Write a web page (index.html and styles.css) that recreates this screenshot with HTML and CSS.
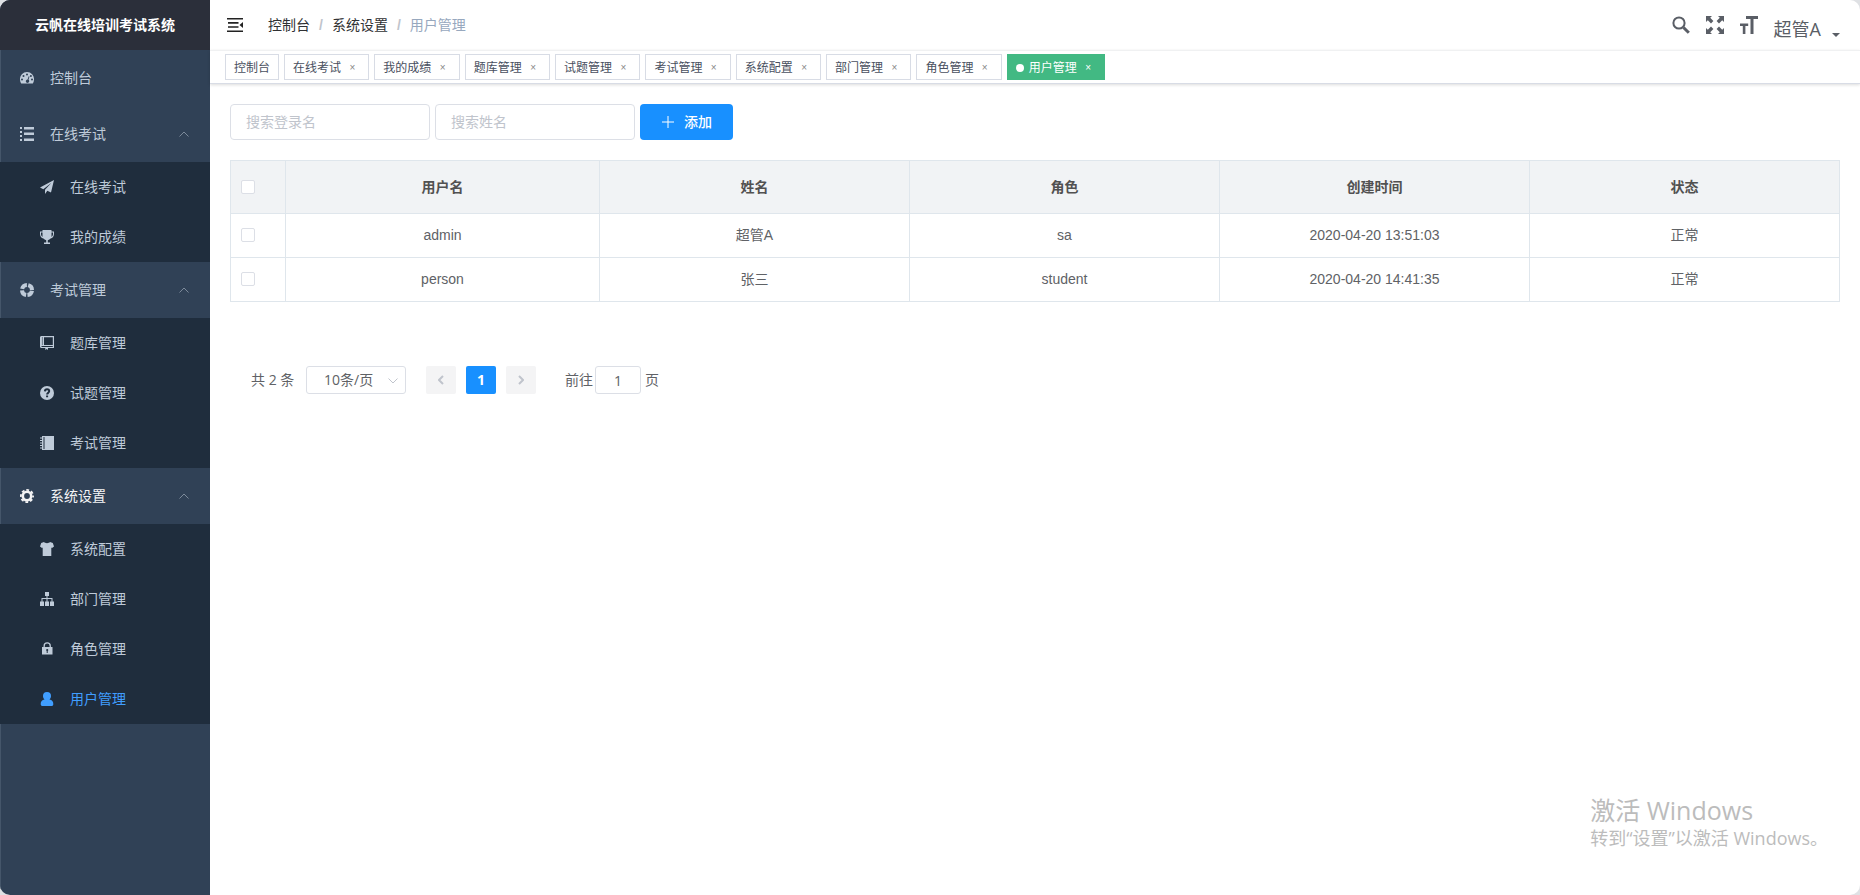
FILE: index.html
```html
<!DOCTYPE html>
<html lang="zh-CN">
<head>
<meta charset="utf-8">
<meta name="viewport" content="width=device-width, initial-scale=1">
<title>用户管理 - 云帆在线培训考试系统</title>
<link rel="stylesheet" href="styles.css">
</head>
<body>
<div class="app">
  <aside class="sidebar">
    <h1 class="logo">云帆在线培训考试系统</h1>
    <nav class="menu">
      <a class="menu-item" href="#"><svg class="icon" viewBox="0 0 14 14"><path fill-rule="evenodd" d="M7 1a7 7 0 0 0-7 7.500c0 1.300.4 2.600 1 3.700.1.200.3.300.5.300h11c.2 0 .4-.1.500-.3.600-1.100 1-2.400 1-3.700A7 7 0 0 0 7 1zM2 7.500a1 1 0 1 1 0 2 1 1 0 0 1 0-2zM3.500 4a1 1 0 1 1 0 2 1 1 0 0 1 0-2zM7 2.500a1 1 0 1 1 0 2 1 1 0 0 1 0-2zM8.700 5.200l.8.300-1 3.300a1.700 1.700 0 1 1-.9-.3zM10.900 4a1 1 0 1 1 0 2 1 1 0 0 1 0-2zM12 7.500a1 1 0 1 1 0 2 1 1 0 0 1 0-2z"/></svg><span>控制台</span></a>
      <button class="menu-item" type="button" aria-expanded="true"><svg class="icon" viewBox="0 0 14 14"><path d="M0 0h2v2H0zM0 4h2v2H0zM0 8h2v2H0zM0 12h2v2H0zM4 0h10v2.500H4zM4 5.500h10V8H4zM4 11.500h10V14H4z"/></svg><span>在线考试</span><svg class="chevron" viewBox="0 0 10 6"><path d="M.5 5.500L5 1l4.500 4.500"/></svg></button>
      <div class="submenu">
        <a class="menu-item" href="#"><svg class="icon" viewBox="0 0 14 14"><path d="M14 0L0 7.500l3.300 1.700L11.500 2.800 5 9.800V14l2.300-3.200 3.700 1.700z"/></svg><span>在线考试</span></a>
        <a class="menu-item" href="#"><svg class="icon" viewBox="0 0 14 14"><path d="M2.500 0h9v1.500H14V4c0 2.300-1.400 4-3.400 4.600A4.500 4.500 0 0 1 7.800 10.200v2.300H10V14H4v-1.500h2.200v-2.300a4.500 4.500 0 0 1-2.800-1.600C1.400 8 0 6.300 0 4V1.500h2.500zM1 2.500V4c0 1.200.6 2.200 1.500 2.900V2.500zm10.500 0v4.400C12.400 6.200 13 5.200 13 4V2.500z"/></svg><span>我的成绩</span></a>
      </div>
      <button class="menu-item" type="button" aria-expanded="true"><svg class="icon" viewBox="0 0 14 14"><circle class="ring" cx="7" cy="7" r="5" stroke-dasharray="6.450 1.400" stroke-dashoffset="-.7"/></svg><span>考试管理</span><svg class="chevron" viewBox="0 0 10 6"><path d="M.5 5.500L5 1l4.500 4.500"/></svg></button>
      <div class="submenu">
        <a class="menu-item" href="#"><svg class="icon" viewBox="0 0 14 14"><path fill-rule="evenodd" d="M1.500 0H14v12H8v2l-1.300-1L5.300 14v-2H2c-1.200 0-2-.5-2-1.500v-9C0 .6.600 0 1.500 0zM4 1.200V9h8.800V1.200zM2 10c-1 0-1 1 0 1h10.800v-1zM1.900 1.500v1h1v-1zm0 2v1h1v-1zm0 2v1h1v-1zm0 2v1h1v-1z"/></svg><span>题库管理</span></a>
        <a class="menu-item" href="#"><svg class="icon" viewBox="0 0 14 14"><circle cx="7" cy="7" r="7"/><path class="cut" d="M4.900 5.400C5 2.400 9.200 2.600 9.200 5c0 1.600-2.100 1.700-2.100 3.600M7.100 9.600v1.700"/></svg><span>试题管理</span></a>
        <a class="menu-item" href="#"><svg class="icon" viewBox="0 0 14 14"><path fill-rule="evenodd" d="M2 0h12v14H2v-1.500H0v-1h2v-1.500H0V9h2V7.500H0v-1h2V5H0V4h2V2.500H0v-1h2zM3.500 1v12h1V1z"/></svg><span>考试管理</span></a>
      </div>
      <button class="menu-item current" type="button" aria-expanded="true"><svg class="icon" viewBox="0 0 14 14"><circle class="gear-body" cx="7" cy="7" r="4.200"/><circle class="gear-teeth" cx="7" cy="7" r="6.100" stroke-dasharray="2.800 1.991" stroke-dashoffset="1.400"/></svg><span>系统设置</span><svg class="chevron" viewBox="0 0 10 6"><path d="M.5 5.500L5 1l4.500 4.500"/></svg></button>
      <div class="submenu">
        <a class="menu-item" href="#"><svg class="icon" viewBox="0 0 14 14"><path d="M4 0c.7 1.500 5.300 1.500 6 0l2.800 1L14 4.500l-2 1.500-.7-.4V14H2.700V5.600L2 6 0 4.500 1.200 1z"/></svg><span>系统配置</span></a>
        <a class="menu-item" href="#"><svg class="icon" viewBox="0 0 14 14"><path d="M5 0h4v4H7.500v2h5v3.500H14V14h-4V9.500h1.500V7h-4v2.500H9V14H5V9.500h1.500V7h-4v2.500H4V14H0V9.500h1.500V6h5V4H5z"/></svg><span>部门管理</span></a>
        <a class="menu-item" href="#"><svg class="icon" viewBox="0 0 14 14"><path fill-rule="evenodd" d="M3.500 5V4a3.700 3.700 0 0 1 7.400 0v1h1.600v7.500H2V5zm1.300 0h4.800V4a2.400 2.400 0 0 0-4.800 0zM7.200 7a1 1 0 0 0-.5 1.900V11h1V8.900A1 1 0 0 0 7.200 7z"/></svg><span>角色管理</span></a>
        <a class="menu-item active" href="#" aria-current="page"><svg class="icon" viewBox="0 0 14 14"><path d="M7 0a4 4 0 0 1 4 4c0 1.500-.6 2.700-1.500 3.400 2.500.3 3.800 2 3.800 4.600 0 1.300-.5 2-1.500 2H2.200c-1 0-1.500-.7-1.500-2 0-2.600 1.300-4.300 3.800-4.600C3.600 6.700 3 5.500 3 4a4 4 0 0 1 4-4z"/></svg><span>用户管理</span></a>
      </div>
    </nav>
  </aside>

  <div class="main">
    <header class="navbar">
      <button class="fold" type="button" aria-label="收起菜单"><svg viewBox="0 0 16 14"><path d="M0 0h16v1.600H0zM1 4.100h10.500v1.600H1zM1 8.200h10.500v1.600H1zM0 12.400h16V14H0zM16 4v6l-3.500-3z"/></svg></button>
      <nav class="breadcrumb" aria-label="面包屑">
        <a href="#">控制台</a><span class="slash">/</span><a href="#">系统设置</a><span class="slash">/</span><span class="here">用户管理</span>
      </nav>
      <div class="tools">
        <button type="button" aria-label="搜索"><svg viewBox="0 0 18 18"><path class="line" d="M12.600 7a5.600 5.600 0 1 1-11.200 0 5.600 5.600 0 0 1 11.200 0z"/><path class="handle" d="M11.500 11.500l5.300 5.300"/></svg></button>
        <button type="button" aria-label="全屏"><svg viewBox="0 0 18 18"><path d="M0 0h6L4.200 1.800 7.400 5 5 7.400 1.800 4.200 0 6zM18 0v6l-1.800-1.800L13 7.400 10.600 5l3.200-3.200L12 0zM0 18v-6l1.800 1.800L5 10.600 7.400 13l-3.200 3.200L6 18zM18 18h-6l1.800-1.800-3.200-3.200 2.400-2.400 3.200 3.200L18 12z"/></svg></button>
        <button type="button" aria-label="字号"><svg viewBox="0 0 18 18"><path d="M6 0h12v3h-4.500v15h-3V3H6zM0 7.500h8.200V10H5.400v8H2.800v-8H0z"/></svg></button>
        <button class="user" type="button"><span>超管A</span><svg class="caret" viewBox="0 0 8 4"><path d="M0 0h8L4 4z"/></svg></button>
      </div>
    </header>

    <nav class="tags" aria-label="已打开页面">
      <a class="tag" href="#">控制台</a>
      <a class="tag" href="#">在线考试 <span class="close">×</span></a>
      <a class="tag" href="#">我的成绩 <span class="close">×</span></a>
      <a class="tag" href="#">题库管理 <span class="close">×</span></a>
      <a class="tag" href="#">试题管理 <span class="close">×</span></a>
      <a class="tag" href="#">考试管理 <span class="close">×</span></a>
      <a class="tag" href="#">系统配置 <span class="close">×</span></a>
      <a class="tag" href="#">部门管理 <span class="close">×</span></a>
      <a class="tag" href="#">角色管理 <span class="close">×</span></a>
      <a class="tag on" href="#">用户管理 <span class="close">×</span></a>
    </nav>

    <main class="content">
      <form class="filters">
        <input class="field" type="text" placeholder="搜索登录名" aria-label="搜索登录名">
        <input class="field" type="text" placeholder="搜索姓名" aria-label="搜索姓名">
        <button class="add" type="button"><svg viewBox="0 0 12 12"><path d="M6 0v12M0 6h12"/></svg><span>添加</span></button>
      </form>

      <table class="grid">
        <colgroup><col class="col-check"><col class="col-user"><col><col><col><col></colgroup>
        <thead>
          <tr><th><input type="checkbox" aria-label="全选"></th><th>用户名</th><th>姓名</th><th>角色</th><th>创建时间</th><th>状态</th></tr>
        </thead>
        <tbody>
          <tr><td><input type="checkbox" aria-label="选择 admin"></td><td>admin</td><td>超管A</td><td>sa</td><td>2020-04-20 13:51:03</td><td>正常</td></tr>
          <tr><td><input type="checkbox" aria-label="选择 person"></td><td>person</td><td>张三</td><td>student</td><td>2020-04-20 14:41:35</td><td>正常</td></tr>
        </tbody>
      </table>

      <div class="pager">
        <span class="total">共 2 条</span>
        <div class="size"><select aria-label="每页条数"><option>10条/页</option></select><svg viewBox="0 0 10 6"><path d="M.5.500L5 5 9.500.500"/></svg></div>
        <div class="pages">
          <button type="button" aria-label="上一页" disabled><svg viewBox="0 0 6 10"><path d="M5 1L1 5l4 4"/></svg></button>
          <button class="on" type="button">1</button>
          <button type="button" aria-label="下一页" disabled><svg viewBox="0 0 6 10"><path d="M1 1l4 4-4 4"/></svg></button>
        </div>
        <label class="jump">前往<input type="number" value="1" min="1">页</label>
      </div>
    </main>
  </div>

  <div class="watermark"><p class="wm-title">激活 Windows</p><p class="wm-text">转到“设置”以激活 Windows。</p></div>
</div>
</body>
</html>
```

FILE: styles.css
```css
* { box-sizing: border-box; }

body {
  margin: 0;
  background: #dfe1e4;
  color: #606266;
  font: 14px/20px "Liberation Sans", "Noto Sans CJK SC", sans-serif;
}

button, input, select { font: inherit; color: inherit; margin: 0; }
button { padding: 0; border: 0; background: none; cursor: pointer; }
a { color: inherit; text-decoration: none; }
svg { display: block; fill: currentColor; }

.app {
  position: relative;
  display: flex;
  min-height: 100vh;
  overflow: hidden;
  border-radius: 10px;
  background: #fff;
}

/* Sidebar */
.sidebar {
  flex: none;
  width: 210px;
  background: #304156;
  color: #bfcbd9;
  box-shadow: inset 1px 0 #45566a;
}
.logo {
  margin: 0;
  background: #2b2f3a;
  color: #fff;
  font-size: 14px;
  line-height: 50px;
  text-align: center;
}
.menu-item {
  display: flex;
  align-items: center;
  gap: 16px;
  width: 100%;
  height: 56px;
  padding: 0 21px 0 20px;
}
.icon { width: 14px; height: 14px; flex: none; }
.ring { fill: none; stroke: currentColor; stroke-width: 4; }
.gear-body { fill: none; stroke: currentColor; stroke-width: 2.600; }
.gear-teeth { fill: none; stroke: currentColor; stroke-width: 1.800; }
.cut { fill: none; stroke: #1f2d3d; stroke-width: 2; }
.chevron {
  width: 10px;
  height: 6px;
  margin-left: auto;
  fill: none;
  stroke: #7c8a9a;
}
.submenu { background: #1f2d3d; }
.submenu .menu-item { height: 50px; padding-left: 40px; }
.current { color: #f4f4f5; }
.active { color: #409eff; }

/* Top bar */
.main { flex: 1; min-width: 0; }
.navbar {
  display: flex;
  align-items: center;
  height: 50px;
  padding: 0 20px 0 17px;
}
.fold { color: #222; }
.fold svg { width: 16px; height: 14px; }
.breadcrumb { display: flex; margin-left: 25px; color: #303133; }
.slash { margin: 0 9px; color: #c0c4cc; font-weight: bold; }
.here { color: #97a8be; }
.tools {
  display: flex;
  align-items: center;
  gap: 16px;
  margin-left: auto;
  color: #5a5e66;
}
.tools svg { width: 18px; height: 18px; }
.tools .line { fill: none; stroke: currentColor; stroke-width: 2; }
.tools .handle { fill: none; stroke: currentColor; stroke-width: 3; }
.user {
  display: flex;
  align-items: flex-end;
  gap: 11px;
  padding-top: 8px;
  font: 18px/24px "Open Sans", "Noto Sans CJK SC", sans-serif;
}
.tools .caret { width: 8px; height: 4px; margin-bottom: 4px; }

/* Open page tags */
.tags {
  display: flex;
  gap: 5px;
  height: 34px;
  padding: 3px 15px;
  border-top: 1px solid #f0f1f2;
  border-bottom: 1px solid #d8dce5;
  box-shadow: 0 1px 3px rgba(0, 0, 0, .14);
}
.tag {
  display: flex;
  align-items: center;
  height: 26px;
  padding: 1px 8px 0;
  border: 1px solid #d8dce5;
  color: #495060;
  font-size: 12px;
  white-space: pre;
}
.close { width: 16px; color: #888; font-size: 10px; text-align: center; }
.tag.on { border-color: #42b983; background: #42b983; color: #fff; }
.tag.on .close { color: #fff; }
.tag.on::before {
  content: "";
  width: 8px;
  height: 8px;
  margin-right: 5px;
  border-radius: 50%;
  background: #fff;
}

/* Filters */
.content { padding: 20px; }
.filters { display: flex; gap: 5px; margin-bottom: 20px; }
.field {
  width: 200px;
  height: 36px;
  padding: 0 15px;
  border: 1px solid #dcdfe6;
  border-radius: 4px;
  background: #fff;
}
.field::placeholder { color: #c0c4cc; opacity: 1; }
.add {
  display: flex;
  align-items: center;
  gap: 10px;
  height: 36px;
  padding: 0 21px 0 22px;
  border-radius: 4px;
  background: #1890ff;
  color: #fff;
}
.add span { font-weight: 500; }
.add svg { width: 12px; height: 12px; stroke: currentColor; }

/* Table */
.grid {
  width: 100%;
  table-layout: fixed;
  border-collapse: separate;
  border-spacing: 0;
  border: 1px solid #dfe6ec;
  border-width: 1px 0 0 1px;
  text-align: center;
}
.col-check { width: 55px; }
.col-user { width: 314px; }
.grid th, .grid td {
  height: 44px;
  padding: 0 10px 2px;
  border: 1px solid #dfe6ec;
  border-width: 0 1px 1px 0;
}
.grid th { height: 53px; padding-bottom: 0; background: #f1f3f5; color: #515151; }
.grid th:first-child, .grid td:first-child { text-align: left; }
.grid input {
  display: block;
  appearance: none;
  width: 14px;
  height: 14px;
  border: 1px solid #dcdfe6;
  border-radius: 2px;
  background: #fff;
}

/* Pagination */
.pager {
  display: flex;
  align-items: center;
  padding: 64px 21px;
  font-family: "Open Sans", "Noto Sans CJK SC", sans-serif;
}
.total { width: 55px; white-space: nowrap; }
.size { position: relative; width: 100px; margin-right: 20px; }
.size select {
  display: block;
  appearance: none;
  width: 100%;
  height: 28px;
  padding: 0 32px 0 17px;
  border: 1px solid #dcdfe6;
  border-radius: 3px;
  background: #fff;
}
.size svg {
  position: absolute;
  top: 12px;
  right: 8px;
  width: 10px;
  height: 6px;
  fill: none;
  stroke: #c0c4cc;
  pointer-events: none;
}
.pages { display: flex; gap: 10px; }
.pages button {
  display: grid;
  place-items: center;
  width: 30px;
  height: 28px;
  border-radius: 2px;
  background: #f4f4f5;
  color: #c0c4cc;
  font-weight: bold;
}
.pages .on { background: #1890ff; color: #fff; }
.pages svg { width: 6px; height: 10px; fill: none; stroke: currentColor; stroke-width: 2; }
.jump { display: flex; align-items: center; margin-left: 29px; }
.jump input {
  appearance: textfield;
  width: 46px;
  height: 28px;
  margin: 0 4px 0 2px;
  padding: 0 4px;
  border: 1px solid #dcdfe6;
  border-radius: 3px;
  text-align: center;
}
.jump input::-webkit-inner-spin-button { display: none; }

/* Desktop watermark */
.watermark {
  position: absolute;
  right: 32px;
  bottom: 45px;
  color: #bcbcbc;
  font-family: "Open Sans", "Noto Sans CJK SC", sans-serif;
  pointer-events: none;
}
.watermark p { margin: 0; }
.wm-title { font-size: 25px; line-height: 32px; }
.wm-text { font-size: 18px; line-height: 24px; }
```
